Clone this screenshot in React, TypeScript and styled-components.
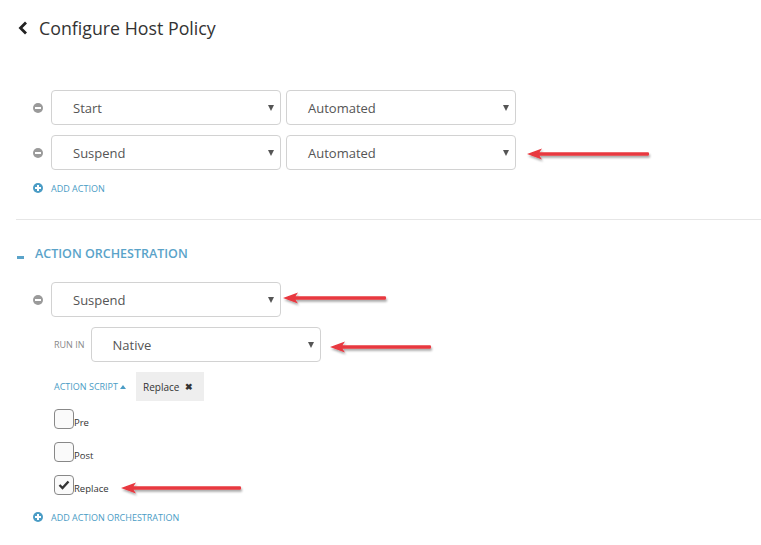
import React from "react";
import styled, { createGlobalStyle } from "styled-components";

const Global = createGlobalStyle`
  html, body { margin: 0; padding: 0; background: #fff; }
  body { font-family: "Open Sans", "Noto Sans", sans-serif; color: #333; }
  * { box-sizing: border-box; }
`;

const Page = styled.div`
  position: relative;
  width: 761px;
  height: 545px;
  padding: 16px 0 0 16px;
  overflow: hidden;
`;

const Header = styled.div`
  display: flex;
  align-items: center;
  gap: 11px;
  height: 24px;
  padding-left: 2px;
`;

const Title = styled.h1`
  margin: 0;
  font-size: 17.8px;
  font-weight: 400;
  color: #333;
`;

const Section = styled.div`
  display: flex;
  flex-direction: column;
  padding-left: 17px;
`;

const Row = styled.div<{ $mt?: number }>`
  display: flex;
  align-items: center;
  gap: 8px;
  margin-top: ${(p) => p.$mt ?? 0}px;
`;

const SubRow = styled.div<{ $mt?: number; $gap?: number }>`
  display: flex;
  align-items: center;
  gap: ${(p) => p.$gap ?? 10}px;
  margin-top: ${(p) => p.$mt ?? 0}px;
  padding-left: 21px;
`;

const SelectBox = styled.div`
  width: 230px;
  height: 35px;
  border: 1px solid #d2d2d2;
  border-radius: 4px;
  display: flex;
  align-items: center;
  justify-content: space-between;
  padding: 0 5px 0 21px;
  font-size: 13px;
  color: #555;
  background: #fff;
`;

const Caret = styled.span`
  width: 0;
  height: 0;
  border-left: 3.5px solid transparent;
  border-right: 3.5px solid transparent;
  border-top: 6px solid #555;
  margin-right: 1px;
`;

const Pair = styled.div`
  display: flex;
  gap: 5px;
`;

const LinkRow = styled.div<{ $mt: number }>`
  display: flex;
  align-items: center;
  gap: 8px;
  margin-top: ${(p) => p.$mt}px;
  height: 14px;
`;

const LinkText = styled.span`
  font-size: 9px;
  color: #4a9cc5;
  text-transform: uppercase;
`;

const Divider = styled.hr`
  border: 0;
  border-top: 1px solid #e6e6e6;
  margin: 24px 0 0 0;
  width: 745px;
`;

const GroupHeader = styled.div`
  display: flex;
  align-items: center;
  gap: 11px;
  margin-top: 25px;
  padding-left: 1px;
  height: 16px;
`;

const Dash = styled.span`
  width: 7px;
  height: 3px;
  background: #5aa3c9;
  align-self: flex-end;
  margin-bottom: 2px;
`;

const GroupTitle = styled.span`
  font-size: 12.5px;
  font-weight: 600;
  color: #5aa3c9;
`;

const SmallLabel = styled.span<{ $blue?: boolean }>`
  font-size: 9px;
  text-transform: uppercase;
  color: ${(p) => (p.$blue ? "#4a9cc5" : "#888")};
  display: flex;
  align-items: center;
  gap: 2px;
`;

const UpCaret = styled.span`
  width: 0;
  height: 0;
  border-left: 3px solid transparent;
  border-right: 3px solid transparent;
  border-bottom: 4px solid #4a9cc5;
`;

const Chip = styled.div`
  height: 29px;
  width: 68px;
  background: #eee;
  display: flex;
  align-items: center;
  justify-content: space-between;
  padding: 0 11px 0 7px;
  font-size: 10px;
  color: #333;
`;

const ChipX = styled.span`
  font-size: 9px;
  font-weight: 700;
  color: #333;
`;

const CheckList = styled.div`
  display: flex;
  flex-direction: column;
  gap: 14px;
  margin-top: 9px;
  padding-left: 21px;
`;

const CheckItem = styled.label`
  display: flex;
  align-items: flex-end;
  height: 19px;
  font-size: 9.5px;
  color: #333;
`;

const Box = styled.span`
  width: 20px;
  height: 20px;
  border: 1px solid #888;
  border-radius: 4px;
  background: #fafafa;
  display: flex;
  align-items: center;
  justify-content: center;
`;

const CheckText = styled.span`
  line-height: 12px;
`;

const Arrow = styled.svg<{ $x: number; $y: number }>`
  position: absolute;
  left: ${(p) => p.$x}px;
  top: ${(p) => p.$y}px;
  overflow: visible;
`;

const MinusIcon = () => (
  <svg width="10" height="10" viewBox="0 0 10 10">
    <circle cx="5" cy="5" r="5" fill="#9a9a9a" />
    <rect x="2" y="4" width="6" height="2" fill="#fff" />
  </svg>
);

const PlusIcon = () => (
  <svg width="10" height="10" viewBox="0 0 10 10">
    <circle cx="5" cy="5" r="5" fill="#4a9cc5" />
    <rect x="2" y="4" width="6" height="2" fill="#fff" />
    <rect x="4" y="2" width="2" height="6" fill="#fff" />
  </svg>
);

const Select = ({ value }: { value: string }) => (
  <SelectBox>
    <span>{value}</span>
    <Caret />
  </SelectBox>
);

const RedArrow = ({ x, y, len }: { x: number; y: number; len: number }) => (
  <Arrow $x={x} $y={y - 7} width={len} height={14} viewBox={`0 0 ${len} 14`}>
    <defs>
      <filter id={`sh${x}`} x="-10%" y="-100%" width="120%" height="300%">
        <feDropShadow dx="1" dy="2" stdDeviation="1.3" floodColor="#000" floodOpacity="0.35" />
      </filter>
    </defs>
    <g filter={`url(#sh${x})`}>
      <path
        d={`M0 7 L15 1.5 L12.5 5.3 L${len - 1.5} 5.3 Q${len} 7 ${len - 1.5} 8.7 L12.5 8.7 L15 12.5 Z`}
        fill="#e8393f"
      />
    </g>
  </Arrow>
);

export default function App() {
  return (
    <>
      <Global />
      <Page>
        <Header>
          <svg width="10" height="14" viewBox="0 0 10 14">
            <polyline points="8,1.5 2.5,7 8,12.5" fill="none" stroke="#222" strokeWidth="2.8" />
          </svg>
          <Title>Configure Host Policy</Title>
        </Header>

        <Section>
          <Row $mt={50}>
            <MinusIcon />
            <Pair>
              <Select value="Start" />
              <Select value="Automated" />
            </Pair>
          </Row>
          <Row $mt={10}>
            <MinusIcon />
            <Pair>
              <Select value="Suspend" />
              <Select value="Automated" />
            </Pair>
          </Row>
          <LinkRow $mt={11}>
            <PlusIcon />
            <LinkText>Add Action</LinkText>
          </LinkRow>
        </Section>

        <Divider />

        <GroupHeader>
          <Dash />
          <GroupTitle>ACTION ORCHESTRATION</GroupTitle>
        </GroupHeader>

        <Section>
          <Row $mt={21}>
            <MinusIcon />
            <Select value="Suspend" />
          </Row>
          <SubRow $mt={10} $gap={6}>
            <SmallLabel>Run in</SmallLabel>
            <Select value="Native" />
          </SubRow>
          <SubRow $mt={10} $gap={10}>
            <SmallLabel $blue>
              Action script <UpCaret />
            </SmallLabel>
            <Chip>
              <span>Replace</span>
              <ChipX>✖</ChipX>
            </Chip>
          </SubRow>
          <CheckList>
            <CheckItem>
              <Box />
              <CheckText>Pre</CheckText>
            </CheckItem>
            <CheckItem>
              <Box />
              <CheckText>Post</CheckText>
            </CheckItem>
            <CheckItem>
              <Box>
                <svg width="12" height="10" viewBox="0 0 12 10">
                  <polyline points="1.5,5 4.5,8 10.5,1.5" fill="none" stroke="#333" strokeWidth="2.4" />
                </svg>
              </Box>
              <CheckText>Replace</CheckText>
            </CheckItem>
          </CheckList>
          <LinkRow $mt={15}>
            <PlusIcon />
            <LinkText>Add Action Orchestration</LinkText>
          </LinkRow>
        </Section>

        <RedArrow x={527} y={154} len={123} />
        <RedArrow x={283} y={298} len={104} />
        <RedArrow x={330} y={347} len={102} />
        <RedArrow x={121} y={488} len={121} />
      </Page>
    </>
  );
}
